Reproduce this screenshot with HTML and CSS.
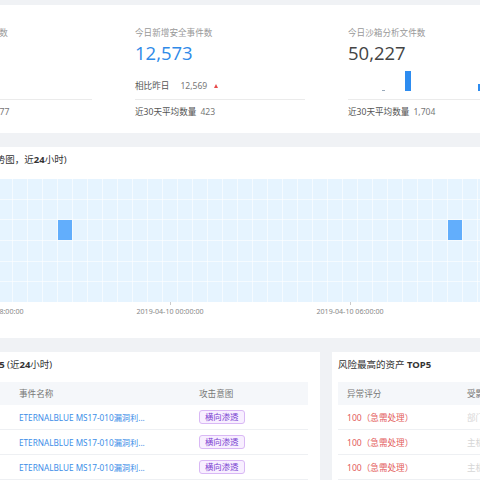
FILE: index.html
```html
<!DOCTYPE html>
<html lang="zh-CN">
<head>
<meta charset="utf-8">
<title>安全态势总览</title>
<link rel="stylesheet" href="styles.css">
</head>
<body>
<div class="page">
  <section class="card stats">
    <div class="stat">
      <div class="stat-label">今日新增威胁告警总数</div>
      <div class="stat-value">3,618</div>
      <div class="stat-mid"><span class="cmp-label">相比昨日</span><span class="cmp-num">3,540</span><span class="up"></span></div>
      <div class="stat-foot"><span>近30天平均数量</span><span class="foot-num">1,277</span></div>
    </div>
    <div class="stat">
      <div class="stat-label">今日新增安全事件数</div>
      <div class="stat-value blue">12,573</div>
      <div class="stat-mid"><span class="cmp-label">相比昨日</span><span class="cmp-num">12,569</span><span class="up"></span></div>
      <div class="stat-foot"><span>近30天平均数量</span><span class="foot-num">423</span></div>
    </div>
    <div class="stat">
      <div class="stat-label">今日沙箱分析文件数</div>
      <div class="stat-value">50,227</div>
      <div class="stat-mid chart-mid">
        <div class="mini-bars">
          <div class="slot"><div class="bar dash" style="height:1px"></div></div>
          <div class="slot"><div class="bar" style="height:20px"></div></div>
          <div class="slot"><div class="bar" style="height:0"></div></div>
          <div class="slot"><div class="bar" style="height:0"></div></div>
          <div class="slot"><div class="bar" style="height:7px"></div></div>
          <div class="slot"><div class="bar" style="height:3px"></div></div>
        </div>
      </div>
      <div class="stat-foot"><span>近30天平均数量</span><span class="foot-num">1,704</span></div>
    </div>
  </section>

  <section class="card heat-card">
    <div class="card-title">安全事件发生趋势 (事件类型分布趋势图，近<b>24</b>小时)</div>
    <div class="heat">
      <div class="hot" style="grid-column:15;grid-row:3"></div>
      <div class="hot" style="grid-column:41;grid-row:3"></div>
    </div>
    <div class="axis">
      <span class="tick">2019-04-09 18:00:00</span>
      <span class="tick">2019-04-10 00:00:00</span>
      <span class="tick">2019-04-10 06:00:00</span>
      <span class="tick">2019-04-10 12:00:00</span>
    </div>
  </section>

  <div class="bottom">
    <section class="card list-card left">
      <div class="card-title">安全事件 <b>TOP5</b> (近<b>24</b>小时)</div>
      <div class="tbl">
        <div class="tr th ev"><span>发生时间</span><span>事件名称</span><span>攻击意图</span></div>
        <div class="tr ev"><span class="muted">04-10 09:12</span><a class="link">ETERNALBLUE MS17-010漏洞利...</a><span><span class="tag">横向渗透</span></span></div>
        <div class="tr ev"><span class="muted">04-10 08:47</span><a class="link">ETERNALBLUE MS17-010漏洞利...</a><span><span class="tag">横向渗透</span></span></div>
        <div class="tr ev"><span class="muted">04-10 08:31</span><a class="link">ETERNALBLUE MS17-010漏洞利...</a><span><span class="tag">横向渗透</span></span></div>
      </div>
    </section>
    <section class="card list-card right">
      <div class="card-title">风险最高的资产 <b>TOP5</b></div>
      <div class="tbl">
        <div class="tr th asset"><span>异常评分</span><span>受影响资产</span></div>
        <div class="tr asset"><span class="risk">100（急需处理）</span><span class="masked">部门主机</span></div>
        <div class="tr asset"><span class="risk">100（急需处理）</span><span class="masked">主机</span></div>
        <div class="tr asset"><span class="risk">100（急需处理）</span><span class="masked">主机</span></div>
      </div>
    </section>
  </div>
</div>
</body>
</html>
```

FILE: styles.css
```css
html, body {
  margin: 0;
  padding: 0;
  overflow: hidden;
  background: #f0f2f5;
}
body {
  font-family: "Noto Sans", "Noto Sans CJK SC", sans-serif;
  color: #666;
}
.page {
  margin-left: -160px;
  width: 1000px;
  padding-top: 5px;
  display: flex;
  flex-direction: column;
  gap: 14px;
}
.card {
  background: #fff;
}
b { font-weight: 700; }

/* stats */
.stats {
  height: 128px;
  box-sizing: border-box;
  padding: 21px 0 8px 82px;
  display: flex;
  gap: 43px;
}
.stat {
  width: 170px;
  display: flex;
  flex-direction: column;
}
.stat-label {
  font-size: 8.6px;
  line-height: 14px;
  color: #999;
  white-space: nowrap;
}
.stat-value {
  font-size: 18.5px;
  line-height: 26px;
  color: #444;
  font-family: "Open Sans", "Noto Sans", sans-serif;
}
.stat-value.blue { color: #2f8ae8; }
.stat-mid {
  height: 34px;
  box-sizing: border-box;
  border-bottom: 1px solid #ebebeb;
  display: flex;
  align-items: flex-end;
  padding-bottom: 6px;
  font-size: 8.6px;
  line-height: 14px;
  white-space: nowrap;
}
.cmp-label { color: #555; }
.cmp-num { color: #777; margin-left: 11px; }
.up {
  margin-left: 7px;
  margin-bottom: 5px;
  width: 0;
  height: 0;
  border-left: 2.5px solid transparent;
  border-right: 2.5px solid transparent;
  border-bottom: 4px solid #e84a4a;
}
.chart-mid { padding-bottom: 8px; }
.mini-bars {
  display: flex;
  align-items: flex-end;
  padding-left: 23px;
  height: 26px;
}
.slot {
  width: 24.4px;
  display: flex;
  justify-content: center;
  align-items: flex-end;
  height: 100%;
}
.bar {
  width: 6px;
  background: #2d8cf0;
}
.bar.dash { width: 3px; background: #9ab; }
.stat-foot {
  font-size: 8.6px;
  line-height: 24px;
  color: #555;
  white-space: nowrap;
}
.foot-num { margin-left: 4px; color: #777; }

/* heatmap */
.heat-card {
  height: 191px;
  box-sizing: border-box;
  padding: 6px 0 0 8px;
}
.card-title {
  font-size: 9.5px;
  line-height: 14px;
  color: #333;
  white-space: nowrap;
}
.heat-card .card-title { padding-left: 0; }
.heat {
  margin-top: 12px;
  width: 719px;
  height: 123px;
  display: grid;
  grid-template-columns: repeat(48, 14px);
  grid-template-rows: repeat(6, 1fr);
  gap: 1px;
  background-color: #e6f4ff;
  background-image:
    repeating-linear-gradient(to right, transparent 0 14px, rgba(255,255,255,0.6) 14px 15px),
    repeating-linear-gradient(to bottom, transparent 0 19.67px, rgba(255,255,255,0.6) 19.67px 20.67px);
}
.hot { background: #62aefc; }
.axis {
  display: flex;
  padding-left: 52px;
}
.tick {
  width: 180px;
  text-align: center;
  font-size: 7.1px;
  line-height: 14px;
  color: #888;
  padding-top: 2px;
  position: relative;
}
.tick::before {
  content: "";
  position: absolute;
  left: 50%;
  top: 0;
  width: 1px;
  height: 3px;
  background: #ccc;
}

/* bottom lists */
.bottom {
  display: grid;
  grid-template-columns: 480px 1fr;
  gap: 12px;
}
.list-card {
  height: 200px;
  box-sizing: border-box;
  padding: 6px 12px 0 6px;
}
.list-card.right { padding-right: 6px; }
.list-card .card-title { margin-bottom: 10px; }
.list-card.left .card-title { padding-left: 94px; }
.tr {
  display: grid;
  align-items: center;
  height: 25px;
  border-bottom: 1px solid #eef0f3;
  font-size: 8.6px;
  box-sizing: border-box;
  white-space: nowrap;
}
.tr > * { padding-left: 9px; }
.tr.th {
  height: 23px;
  background: #f5f7fa;
  color: #777;
  border-bottom: none;
}
.ev { grid-template-columns: 164px 180px 1fr; }
.asset { grid-template-columns: 120px 1fr; }
.link { color: #3d8ee8; text-decoration: none; font-size: 8.2px; }
.muted { color: #999; }
.tag {
  display: inline-block;
  font-size: 8.4px;
  line-height: 12px;
  padding: 0 5px;
  border: 1px solid #d9b8f5;
  background: #f8efff;
  color: #7a3fd1;
  border-radius: 3px;
}
.risk { color: #e35b5b; }
.masked { color: #d6d6d6; }
```
